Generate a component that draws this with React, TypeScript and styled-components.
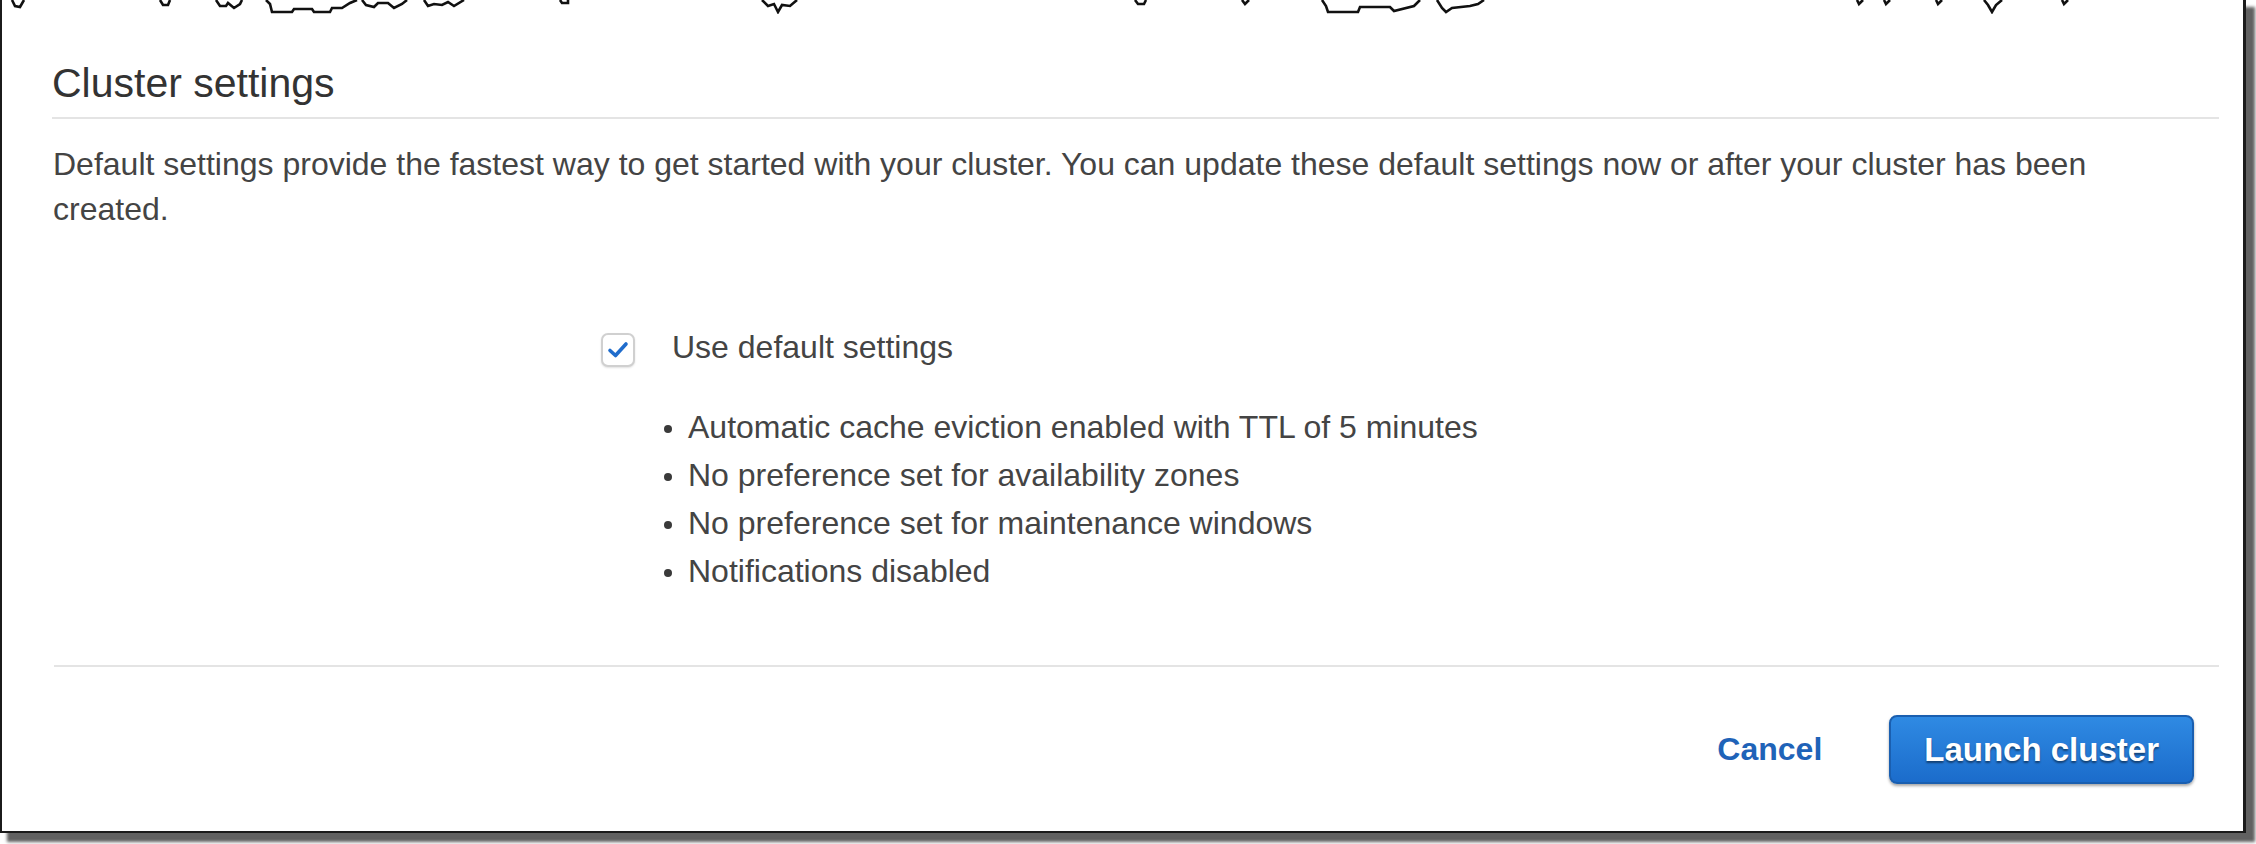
import React from "react";
import styled, { createGlobalStyle } from "styled-components";

const GlobalStyle = createGlobalStyle`
  html, body {
    margin: 0;
    padding: 0;
    background: #ffffff;
  }
  body {
    font-family: "Liberation Sans", Arial, sans-serif;
    width: 2256px;
    height: 844px;
  }
  #root {
    width: 2256px;
    height: 844px;
  }
`;

const Frame = styled.div`
  width: 2246px;
  height: 833px;
  box-sizing: border-box;
  background: #ffffff;
  border-style: solid;
  border-color: #1b1b1b;
  border-width: 0 3px 2px 2px;
  box-shadow: 8px 8px 3px 1px rgba(0, 0, 0, 0.62);
  display: flex;
  flex-direction: column;
`;

const TornEdge = styled.svg`
  display: block;
  width: 100%;
  height: 14px;
  flex: none;
`;

const Panel = styled.section`
  padding: 0 24px 0 50px;
  display: flex;
  flex-direction: column;
`;

const Title = styled.h2`
  margin: 45px 0 0;
  padding: 0 0 10px 0;
  font-size: 41px;
  line-height: 48px;
  font-weight: 400;
  color: #333333;
  border-bottom: 2px solid #e4e4e4;
`;

const Description = styled.p`
  margin: 23px 0 0 1px;
  padding-right: 90px;
  font-size: 32px;
  line-height: 45px;
  color: #444444;
`;

const OptionRow = styled.label`
  margin: 92px 0 0 549px;
  display: flex;
  align-items: center;
  gap: 37px;
  font-size: 32px;
  line-height: 46px;
  color: #444444;
`;

const CheckBox = styled.span`
  width: 34px;
  height: 34px;
  box-sizing: border-box;
  border: 2px solid #d0d0d0;
  border-radius: 7px;
  background: #ffffff;
  box-shadow: 0 1px 2px rgba(0, 0, 0, 0.12);
  display: flex;
  align-items: center;
  justify-content: center;
  margin-top: 6px;
`;

const SettingsList = styled.ul`
  margin: 33px 0 0 612px;
  padding: 0;
  list-style: none;
`;

const SettingItem = styled.li`
  display: flex;
  align-items: center;
  font-size: 32px;
  line-height: 48px;
  color: #444444;
`;

const Dot = styled.span`
  width: 8px;
  height: 8px;
  border-radius: 50%;
  background: #3a3a3a;
  margin: 4px 16px 0 0;
  flex: none;
`;

const Footer = styled.footer`
  margin: 70px 0 0 2px;
  padding: 48px 25px 0 0;
  border-top: 2px solid #e4e4e4;
  display: flex;
  justify-content: flex-end;
  align-items: center;
  gap: 67px;
`;

const LinkButton = styled.button`
  border: none;
  background: none;
  padding: 0;
  font-family: "Liberation Sans", Arial, sans-serif;
  font-size: 32px;
  font-weight: 700;
  color: #1f63b8;
  cursor: pointer;
`;

const PrimaryButton = styled.button`
  height: 69px;
  padding: 0 33px;
  box-sizing: border-box;
  border: 2px solid #1a5fb0;
  border-radius: 8px;
  background: linear-gradient(#2f8ae3, #1b6ccb);
  box-shadow: 0 2px 3px rgba(0, 0, 0, 0.35);
  font-family: "Liberation Sans", Arial, sans-serif;
  font-size: 33px;
  font-weight: 700;
  color: #ffffff;
  text-shadow: 0 2px 2px rgba(0, 0, 0, 0.45);
  cursor: pointer;
`;

const tornPaths = [
  "M10 0 L13 6 L18 7 L22 0",
  "M158 0 L161 5 L166 5 L168 0",
  "M214 0 L218 6 L224 6 L226 3 L232 8 L238 4 L240 0",
  "M264 0 L268 4 L270 12 L290 12 L292 9 L310 9 L312 12 L328 12 L330 8 L340 8 L348 3 L355 0",
  "M360 0 L364 5 L372 7 L376 3 L386 3 L392 8 L400 4 L405 0",
  "M422 0 L426 6 L432 4 L440 5 L446 2 L452 6 L462 0",
  "M558 0 L560 3 L566 3 L566 0",
  "M760 0 L766 6 L772 4 L776 12 L780 5 L788 6 L795 0",
  "M1133 0 L1136 4 L1142 4 L1144 0",
  "M1240 0 L1243 4 L1247 0",
  "M1320 0 L1324 6 L1326 12 L1356 12 L1358 7 L1388 7 L1392 11 L1412 6 L1418 0",
  "M1435 0 L1440 8 L1444 12 L1450 8 L1468 6 L1476 4 L1482 0",
  "M1855 0 L1857 4 L1861 0",
  "M1882 0 L1884 4 L1888 0",
  "M1934 0 L1936 4 L1940 0",
  "M1982 0 L1986 5 L1990 12 L1994 5 L2000 0",
  "M2060 0 L2062 4 L2066 0",
];

const settings = [
  "Automatic cache eviction enabled with TTL of 5 minutes",
  "No preference set for availability zones",
  "No preference set for maintenance windows",
  "Notifications disabled",
];

export default function App() {
  return (
    <>
      <GlobalStyle />
      <Frame>
        <TornEdge viewBox="0 0 2241 14" preserveAspectRatio="none">
          {tornPaths.map((d) => (
            <path
              key={d}
              d={d}
              fill="#ffffff"
              stroke="#111111"
              strokeWidth={2.6}
              strokeLinejoin="miter"
            />
          ))}
        </TornEdge>
        <Panel>
          <Title>Cluster settings</Title>
          <Description>
            Default settings provide the fastest way to get started with your
            cluster. You can update these default settings now or after your
            cluster has been created.
          </Description>
          <OptionRow>
            <CheckBox>
              <svg width="22" height="18" viewBox="0 0 22 18">
                <path
                  d="M3 9.5 L8.5 14.5 L19 3"
                  fill="none"
                  stroke="#1f6ccc"
                  strokeWidth={3.6}
                  strokeLinecap="round"
                  strokeLinejoin="round"
                />
              </svg>
            </CheckBox>
            Use default settings
          </OptionRow>
          <SettingsList>
            {settings.map((s) => (
              <SettingItem key={s}>
                <Dot />
                {s}
              </SettingItem>
            ))}
          </SettingsList>
          <Footer>
            <LinkButton>Cancel</LinkButton>
            <PrimaryButton>Launch cluster</PrimaryButton>
          </Footer>
        </Panel>
      </Frame>
    </>
  );
}
